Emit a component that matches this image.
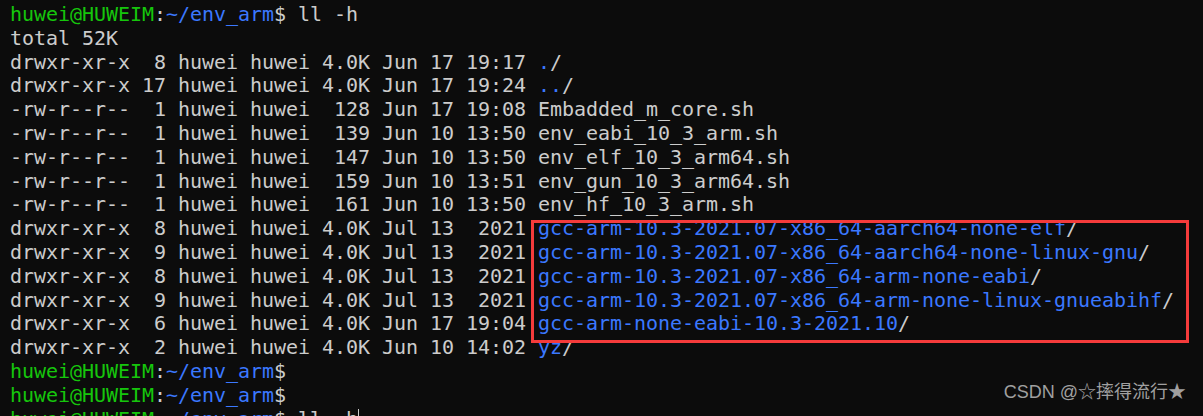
import React from "react";

type Seg = { t: string; c?: "g" | "b" | "w" };

const G = "text-[#16c60c]";
const B = "text-[#3b78ff]";
const W = "text-[#cccccc]";

const prompt = (cmd = ""): Seg[] => [
  { t: "huwei@HUWEIM", c: "g" },
  { t: ":", c: "w" },
  { t: "~/env_arm", c: "b" },
  { t: "$" + cmd, c: "w" },
];

const entry = (meta: string, name: string, dir: boolean): Seg[] =>
  dir
    ? [
        { t: meta + " ", c: "w" },
        { t: name.replace(/\/$/, ""), c: "b" },
        { t: "/", c: "w" },
      ]
    : [{ t: meta + " " + name, c: "w" }];

const lines: Seg[][] = [
  prompt(" ll -h"),
  [{ t: "total 52K" }],
  entry("drwxr-xr-x  8 huwei huwei 4.0K Jun 17 19:17", ".", true),
  entry("drwxr-xr-x 17 huwei huwei 4.0K Jun 17 19:24", "..", true),
  entry("-rw-r--r--  1 huwei huwei  128 Jun 17 19:08", "Embadded_m_core.sh", false),
  entry("-rw-r--r--  1 huwei huwei  139 Jun 10 13:50", "env_eabi_10_3_arm.sh", false),
  entry("-rw-r--r--  1 huwei huwei  147 Jun 10 13:50", "env_elf_10_3_arm64.sh", false),
  entry("-rw-r--r--  1 huwei huwei  159 Jun 10 13:51", "env_gun_10_3_arm64.sh", false),
  entry("-rw-r--r--  1 huwei huwei  161 Jun 10 13:50", "env_hf_10_3_arm.sh", false),
  entry("drwxr-xr-x  8 huwei huwei 4.0K Jul 13  2021", "gcc-arm-10.3-2021.07-x86_64-aarch64-none-elf", true),
  entry("drwxr-xr-x  9 huwei huwei 4.0K Jul 13  2021", "gcc-arm-10.3-2021.07-x86_64-aarch64-none-linux-gnu", true),
  entry("drwxr-xr-x  8 huwei huwei 4.0K Jul 13  2021", "gcc-arm-10.3-2021.07-x86_64-arm-none-eabi", true),
  entry("drwxr-xr-x  9 huwei huwei 4.0K Jul 13  2021", "gcc-arm-10.3-2021.07-x86_64-arm-none-linux-gnueabihf", true),
  entry("drwxr-xr-x  6 huwei huwei 4.0K Jun 17 19:04", "gcc-arm-none-eabi-10.3-2021.10", true),
  entry("drwxr-xr-x  2 huwei huwei 4.0K Jun 10 14:02", "yz", true),
  prompt(),
  prompt(),
  prompt(" ll -h"),
];

export default function App() {
  return (
    <div className="relative h-[416px] w-full overflow-hidden bg-[#0c0c0c]">
      <div
        className="pl-[10px] pt-[3px] text-[20px] leading-[23.8px] tracking-[-0.04px] whitespace-pre"
        style={{ fontFamily: '"DejaVu Sans Mono", "Liberation Mono", monospace' }}
      >
        {lines.map((segs, i) => (
          <div key={i} className={W}>
            {segs.map((s, j) => (
              <span key={j} className={s.c === "g" ? G : s.c === "b" ? B : W}>
                {s.t}
              </span>
            ))}
            {i === lines.length - 1 && (
              <span className="inline-block h-[22px] w-[1px] bg-[#cccccc] align-middle" />
            )}
          </div>
        ))}
      </div>

      {/* annotation box */}
      <div className="absolute left-[531px] top-[220px] h-[123px] w-[658px] border-[3px] border-[#f53b3b]" />

      {/* watermark */}
      <div
        className="absolute right-[17px] top-[380px] text-[18px] leading-[24px] text-[#a0a0a0]"
        style={{ fontFamily: '"Liberation Sans", "Noto Sans CJK SC", sans-serif' }}
      >
        CSDN @☆摔得流行★
      </div>
    </div>
  );
}
